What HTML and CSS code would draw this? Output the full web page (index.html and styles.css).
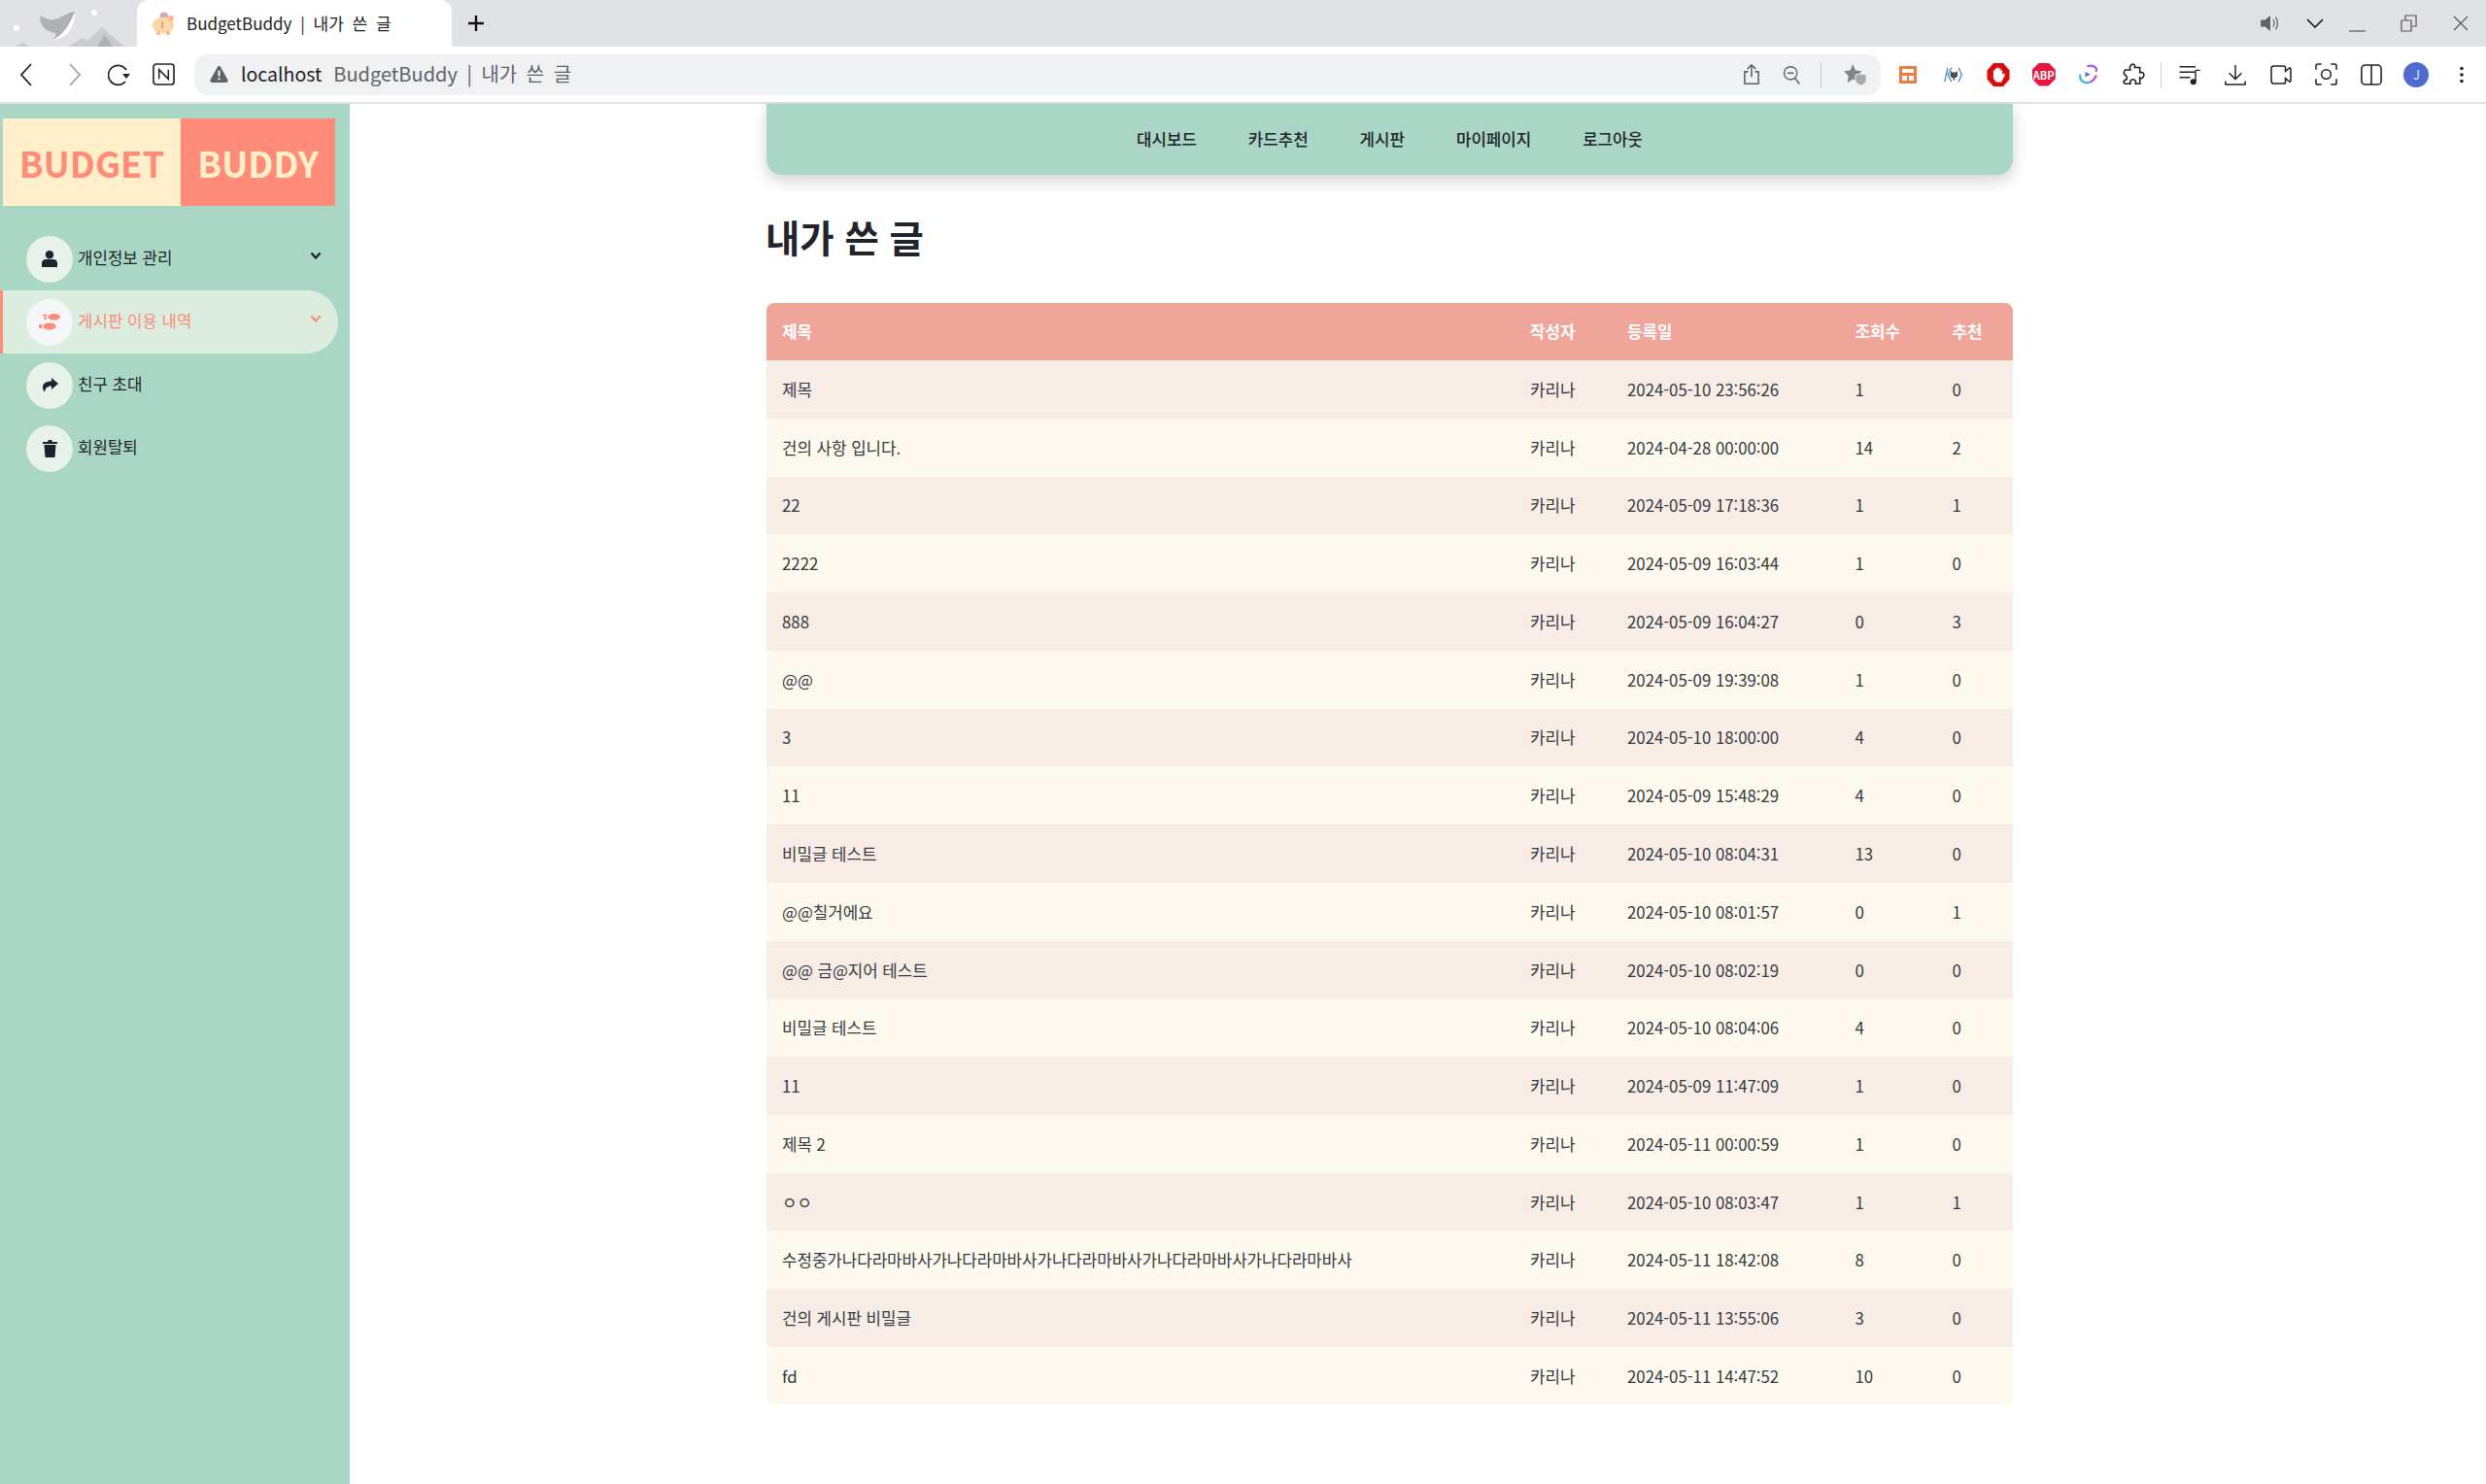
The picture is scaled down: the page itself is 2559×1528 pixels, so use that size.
FILE: index.html
```html
<!DOCTYPE html>
<html lang="ko">

<head>
    <meta charset="UTF-8">
    <title>BudgetBuddy | 내가 쓴 글</title>
    <link rel="stylesheet" href="styles.css">
</head>

<body>

    <div class="tab-strip">
        <svg class="theme-art" width="141" height="48" viewBox="0 0 141 48">
            <circle cx="17" cy="29" r="3" fill="#fff"/>
            <circle cx="97" cy="13" r="3" fill="#fff"/>
            <path d="M15 48 L23 44 L31 48 Z" fill="#c8cacd"/>
            <path d="M70 48 L85 39 L90 42 L105 28 L128 48 Z" fill="#c9cbce"/>
            <path d="M100 48 L108 36 L116 48 Z" fill="#aeb0b4"/>
            <path d="M41 16 C50 21 55 22 62 18 C69 14 74 12 77 12 C78 24 72 41 54 41 C60 35 58 34 53 33 C45 31 41 24 41 16 Z" fill="#aeb0b3"/>
            <path d="M77 12 C78 24 72 41 54 41 C66 36 72 24 77 12 Z" fill="#fff"/>
        </svg>
        <div class="tab">
            <svg class="favicon" width="26" height="26" viewBox="0 0 26 26">
                <circle cx="14" cy="6" r="4.5" fill="#c9a9c4"/>
                <ellipse cx="13" cy="15" rx="11" ry="8.5" fill="#fbd6a8"/>
                <rect x="6" y="21" width="4" height="4" fill="#f7c08c"/>
                <rect x="16" y="21" width="4" height="4" fill="#f7c08c"/>
                <circle cx="21" cy="8" r="3" fill="#f9b88c"/>
                <path d="M12 11 V18" stroke="#e98a6c" stroke-width="1.5"/>
            </svg>
            <span class="tab-title">BudgetBuddy | 내가 쓴 글</span>
        </div>
        <svg class="new-tab" width="18" height="18" viewBox="0 0 18 18">
            <path d="M9 1 V17 M1 9 H17" stroke="#111" stroke-width="2.4"/>
        </svg>
        <div class="window-controls">
            <svg class="sound-icon" width="22" height="18" viewBox="0 0 24 20">
                <path d="M1 6 H6 L12 1 V19 L6 14 H1 Z" fill="#5f6368"/>
                <path d="M15 6 C17 8 17 12 15 14 M18 3 C21 7 21 13 18 17" stroke="#5f6368" stroke-width="1.4" fill="none"/>
            </svg>
            <svg class="tab-search" width="18" height="10" viewBox="0 0 18 10">
                <path d="M1 1 L9 9 L17 1" stroke="#111" stroke-width="1.5" fill="none"/>
            </svg>
            <svg class="win-min" width="17" height="18" viewBox="0 0 17 18">
                <path d="M0 17 H17" stroke="#555" stroke-width="1.2"/>
            </svg>
            <svg class="win-restore" width="17" height="18" viewBox="0 0 17 18">
                <path d="M1 6 H11 V17 H1 Z M5 6 V1 H16 V12 H11" stroke="#555" stroke-width="1.2" fill="none"/>
            </svg>
            <svg class="win-close" width="16" height="16" viewBox="0 0 16 16">
                <path d="M1 1 L15 15 M15 1 L1 15" stroke="#555" stroke-width="1.2"/>
            </svg>
        </div>
    </div>

    <div class="toolbar">
        <svg class="nav-back" width="14" height="24" viewBox="0 0 14 24">
            <path d="M12 1 L2 12 L12 23" stroke="#222" stroke-width="1.8" fill="none"/>
        </svg>
        <svg class="nav-forward" width="14" height="24" viewBox="0 0 14 24">
            <path d="M2 1 L12 12 L2 23" stroke="#a0a0a0" stroke-width="1.8" fill="none"/>
        </svg>
        <svg class="nav-reload" width="24" height="24" viewBox="0 0 24 24">
            <path d="M18 19 A10 10 0 1 1 19 7" stroke="#222" stroke-width="1.7" fill="none"/>
            <path d="M16 13 H24 L20 18 Z" fill="#222" transform="translate(-1 -2)"/>
        </svg>
        <svg class="nav-notion" width="23" height="23" viewBox="0 0 24 24">
            <rect x="1" y="1" width="22" height="22" rx="3" stroke="#222" stroke-width="1.7" fill="none"/>
            <path d="M7 17 V7 L17 17 V7" stroke="#222" stroke-width="1.6" fill="none"/>
        </svg>

        <div class="address-bar">
            <svg class="warn-icon" width="19" height="17" viewBox="0 0 20 18">
                <path d="M10 0 C11 0 11.5 .5 12 1.5 L19.5 15 C20 16.5 19 18 17.5 18 H2.5 C1 18 0 16.5 .5 15 L8 1.5 C8.5 .5 9 0 10 0 Z" fill="#5f6368"/>
                <path d="M10 5 V11 M10 13 V15" stroke="#fff" stroke-width="2"/>
            </svg>
            <span class="url-host">localhost</span>
            <span class="url-title">BudgetBuddy | 내가 쓴 글</span>
            <div class="address-actions">
                <svg width="18" height="23" viewBox="0 0 20 26">
                    <path d="M6 10 H2 V24 H18 V10 H14 M10 16 V2 M5 7 L10 2 L15 7" stroke="#5f6368" stroke-width="1.8" fill="none"/>
                </svg>
                <svg class="zoom-out" width="20" height="20" viewBox="0 0 22 24">
                    <circle cx="10" cy="10" r="8" stroke="#5f6368" stroke-width="1.7" fill="none"/>
                    <path d="M6 10 H14 M15 16 L21 23" stroke="#5f6368" stroke-width="1.8"/>
                </svg>
                <span class="address-sep"></span>
                <svg class="fav-icon" width="24" height="22" viewBox="0 0 26 24">
                    <path d="M10 0 L13 7 L20 8 L15 13 L16 20 L10 17 L4 21 L5 13 L0 8 L7 7 Z" fill="#80868b"/>
                    <path d="M13 12 L19 11 L25 12 V18 C25 21 22 23 19 24 C16 23 13 21 13 18 Z" fill="#a5a8ac" stroke="#f0f1f3"/>
                </svg>
            </div>
        </div>

        <div class="ext-group">
            <svg width="18" height="18" viewBox="0 0 18 18">
                <rect width="18" height="18" rx="1" fill="#ee7b45"/>
                <rect x="3" y="3" width="12" height="4" fill="#fff"/>
                <rect x="3" y="10" width="5" height="5" fill="#fff"/>
                <rect x="10" y="10" width="5" height="5" fill="#fff"/>
            </svg>
            <svg width="23" height="16" viewBox="0 0 24 20">
                <path d="M5 1 L1 19 M10 1 L5 10 L10 19 M19 1 L23 10 L19 19" stroke="#3b82c4" stroke-width="1.5" fill="none"/>
                <path d="M9 5 L11 7 H15 L17 5 L18 10 C18 13 15 14 14 14 V17 H12 V14 C10 14 8 13 8 10 Z" fill="#4a4f55"/>
            </svg>
            <svg width="24" height="24" viewBox="0 0 25 26">
                <path d="M7 0 H18 L25 8 V18 L18 26 H7 L0 18 V8 Z" fill="#d80c0c"/>
                <path d="M7 13 V8 H9 V6 H11 V5 H13 V6 H15 V8 H17 V13 L19 11 L20 13 L16 21 H10 L7 17 Z" fill="#fff"/>
            </svg>
            <div class="abp-badge">ABP</div>
            <svg width="22" height="21" viewBox="0 0 24 24">
                <path d="M10 3 C14 1 19 2 21 5 V9" stroke="#a45ce0" stroke-width="2.5" fill="none"/>
                <path d="M2 12 V16 C3 21 9 23 14 21" stroke="#3ab6e8" stroke-width="2.5" fill="none"/>
                <path d="M21 13 C19 18 17 20 14 21" stroke="#c04ed8" stroke-width="2.5" fill="none"/>
                <path d="M8 9 L14 12 L8 15 Z" fill="#6a5ce0"/>
            </svg>
            <svg width="23" height="23" viewBox="0 0 26 26">
                <path d="M10 2 C13 0 15 3 14 5 H20 V11 C23 10 26 12 24 16 C23 18 21 18 20 17 V24 H15 C16 21 14 19 12 19 C10 19 8 21 9 24 H3 C1 24 1 22 2 20 C5 20 6 17 4 15 C2 13 0 12 3 8 H9 C8 6 8 4 10 2 Z" stroke="#222" stroke-width="1.8" fill="none"/>
            </svg>
        </div>
        <span class="toolbar-sep"></span>
        <div class="ext-group">
            <svg width="23" height="22" viewBox="0 0 24 24">
                <path d="M0 3 H18 M0 9 H18 M0 15 H12" stroke="#222" stroke-width="1.5"/>
                <path d="M18 7 H23 M18 7 V20" stroke="#222" stroke-width="1.5" fill="none"/>
                <circle cx="15.5" cy="20" r="3.3" fill="#222"/>
            </svg>
            <svg width="22" height="22" viewBox="0 0 24 24">
                <path d="M12 1 V16 M5 10 L12 17 L19 10 M1 19 V23 H23 V19" stroke="#222" stroke-width="1.6" fill="none"/>
            </svg>
            <svg width="22" height="20" viewBox="0 0 24 22">
                <path d="M4 1 H15 C16 1 17 2 17 3 V7 L22 3 C23 3 23 4 23 5 V17 C23 18 23 19 22 19 L17 15 V19 C17 20 16 21 15 21 H4 C2 21 1 20 1 18 V4 C1 2 2 1 4 1 Z" stroke="#222" stroke-width="1.7" fill="none"/>
            </svg>
            <svg width="23" height="23" viewBox="0 0 24 24">
                <path d="M7 1 H3 C2 1 1 2 1 3 V7 M17 1 H21 C22 1 23 2 23 3 V7 M7 23 H3 C2 23 1 22 1 21 V17 M17 23 H21 C22 23 23 22 23 21 V17" stroke="#222" stroke-width="1.6" fill="none"/>
                <circle cx="12" cy="12" r="5" stroke="#222" stroke-width="1.6" fill="none"/>
            </svg>
            <svg width="22" height="22" viewBox="0 0 24 24">
                <rect x="1" y="1" width="22" height="22" rx="4" stroke="#222" stroke-width="1.7" fill="none"/>
                <path d="M12 1 V23" stroke="#222" stroke-width="1.7"/>
            </svg>
            <div class="avatar">J</div>
            <svg width="6" height="18" viewBox="0 0 6 22">
                <circle cx="3" cy="3" r="2.2" fill="#222"/>
                <circle cx="3" cy="11" r="2.2" fill="#222"/>
                <circle cx="3" cy="19" r="2.2" fill="#222"/>
            </svg>
        </div>
    </div>

    <div class="page">
        <aside class="sidebar">
            <div class="logo">
                <span class="logo-budget">BUDGET</span>
                <span class="logo-buddy">BUDDY</span>
            </div>
            <ul class="side-menu">
                <li class="side-item">
                    <span class="side-circle">
                        <svg width="16" height="17" viewBox="0 0 16 17">
                            <circle cx="8" cy="4.2" r="4.2" fill="#1b2530"/>
                            <path d="M0 17 V13 C0 10.5 2 9 4 9 H12 C14 9 16 10.5 16 13 V17 Z" fill="#1b2530"/>
                        </svg>
                    </span>
                    <span class="side-label">개인정보 관리</span>
                    <svg class="side-chevron" width="12" height="9" viewBox="0 0 12 9">
                        <path d="M1.5 1.5 L6 6.5 L10.5 1.5" stroke="currentColor" stroke-width="2.4" fill="none"/>
                    </svg>
                </li>
                <li class="side-item active">
                    <span class="side-circle">
                        <svg width="22" height="17" viewBox="0 0 22 17">
                            <ellipse cx="15.7" cy="3.3" rx="6.3" ry="3.3" fill="currentColor"/>
                            <rect x="4.3" y="0.5" width="4" height="2.2" rx="1.1" fill="currentColor"/>
                            <rect x="5" y="3.6" width="3.5" height="2.4" rx="1.2" fill="currentColor"/>
                            <ellipse cx="11" cy="13" rx="6.7" ry="3.6" fill="currentColor"/>
                            <rect x="0" y="10.7" width="3.3" height="4.6" rx="1.6" fill="currentColor"/>
                        </svg>
                    </span>
                    <span class="side-label">게시판 이용 내역</span>
                    <svg class="side-chevron" width="12" height="9" viewBox="0 0 12 9">
                        <path d="M1.5 1.5 L6 6.5 L10.5 1.5" stroke="currentColor" stroke-width="2.4" fill="none"/>
                    </svg>
                </li>
                <li class="side-item">
                    <span class="side-circle">
                        <svg width="17" height="15" viewBox="0 0 17 15">
                            <path d="M10 0 L17 6 L10 12 V8.5 C6 8.5 3.5 10 3 15 C0 11 -1 4 10 3.5 Z" fill="#1b2530"/>
                        </svg>
                    </span>
                    <span class="side-label">친구 초대</span>
                </li>
                <li class="side-item">
                    <span class="side-circle">
                        <svg width="15" height="18" viewBox="0 0 15 18">
                            <path d="M0 2 H5 L6 0 H9 L10 2 H15 V4 H0 Z M1.5 5 H13.5 L12.5 18 H2.5 Z" fill="#1b2530"/>
                        </svg>
                    </span>
                    <span class="side-label">회원탈퇴</span>
                </li>
            </ul>
        </aside>

        <main class="content">
            <nav class="top-nav">
                <a class="top-link">대시보드</a>
                <a class="top-link">카드추천</a>
                <a class="top-link">게시판</a>
                <a class="top-link">마이페이지</a>
                <a class="top-link">로그아웃</a>
            </nav>

            <h1 class="page-title">내가 쓴 글</h1>

            <div class="table-wrap">
                <table class="post-table">
                    <thead>
                        <tr><th>제목</th><th>작성자</th><th>등록일</th><th>조회수</th><th>추천</th></tr>
                    </thead>
                    <tbody>
                        <tr><td>제목</td><td>카리나</td><td>2024-05-10 23:56:26</td><td>1</td><td>0</td></tr>
                        <tr><td>건의 사항 입니다.</td><td>카리나</td><td>2024-04-28 00:00:00</td><td>14</td><td>2</td></tr>
                        <tr><td>22</td><td>카리나</td><td>2024-05-09 17:18:36</td><td>1</td><td>1</td></tr>
                        <tr><td>2222</td><td>카리나</td><td>2024-05-09 16:03:44</td><td>1</td><td>0</td></tr>
                        <tr><td>888</td><td>카리나</td><td>2024-05-09 16:04:27</td><td>0</td><td>3</td></tr>
                        <tr><td>@@</td><td>카리나</td><td>2024-05-09 19:39:08</td><td>1</td><td>0</td></tr>
                        <tr><td>3</td><td>카리나</td><td>2024-05-10 18:00:00</td><td>4</td><td>0</td></tr>
                        <tr><td>11</td><td>카리나</td><td>2024-05-09 15:48:29</td><td>4</td><td>0</td></tr>
                        <tr><td>비밀글 테스트</td><td>카리나</td><td>2024-05-10 08:04:31</td><td>13</td><td>0</td></tr>
                        <tr><td>@@칠거에요</td><td>카리나</td><td>2024-05-10 08:01:57</td><td>0</td><td>1</td></tr>
                        <tr><td>@@ 금@지어 테스트</td><td>카리나</td><td>2024-05-10 08:02:19</td><td>0</td><td>0</td></tr>
                        <tr><td>비밀글 테스트</td><td>카리나</td><td>2024-05-10 08:04:06</td><td>4</td><td>0</td></tr>
                        <tr><td>11</td><td>카리나</td><td>2024-05-09 11:47:09</td><td>1</td><td>0</td></tr>
                        <tr><td>제목 2</td><td>카리나</td><td>2024-05-11 00:00:59</td><td>1</td><td>0</td></tr>
                        <tr><td>ㅇㅇ</td><td>카리나</td><td>2024-05-10 08:03:47</td><td>1</td><td>1</td></tr>
                        <tr><td>수정중가나다라마바사가나다라마바사가나다라마바사가나다라마바사가나다라마바사</td><td>카리나</td><td>2024-05-11 18:42:08</td><td>8</td><td>0</td></tr>
                        <tr><td>건의 게시판 비밀글</td><td>카리나</td><td>2024-05-11 13:55:06</td><td>3</td><td>0</td></tr>
                        <tr><td>fd</td><td>카리나</td><td>2024-05-11 14:47:52</td><td>10</td><td>0</td></tr>
                    </tbody>
                </table>
            </div>
        </main>
    </div>

</body>

</html>
```

FILE: styles.css
```css
html,
body {
    margin: 0;
    padding: 0;
}

body {
    width: 2559px;
    height: 1528px;
    overflow: hidden;
    background: #fff;
    font-family: "Noto Sans CJK KR", "Noto Sans", sans-serif;
    color: #212529;
}

/* browser window */
.tab-strip {
    position: relative;
    display: flex;
    align-items: center;
    height: 48px;
    background: #e0e2e6;
}

.theme-art {
    position: absolute;
    left: 0;
    top: 0;
}

.tab {
    position: relative;
    display: flex;
    align-items: center;
    width: 324px;
    height: 48px;
    margin-left: 141px;
    box-sizing: border-box;
    padding: 0 0 0 14px;
    background: #fff;
    border-radius: 12px 12px 0 0;
}

.tab-title {
    margin-left: 11px;
    padding-bottom: 2px;
    font-size: 17px;
    word-spacing: 4px;
    color: #222;
}

.new-tab {
    margin-left: 16px;
}

.window-controls {
    display: flex;
    align-items: center;
    margin-left: auto;
    padding-right: 18px;
}

.sound-icon {
    margin-right: 26px;
}

.tab-search {
    margin-right: 26px;
}

.win-min {
    margin-right: 36px;
}

.win-restore {
    margin-right: 37px;
}

.toolbar {
    position: relative;
    display: flex;
    align-items: center;
    height: 57px;
    box-sizing: border-box;
    padding-left: 20px;
    background: #fff;
    border-radius: 12px 12px 0 0;
}

.toolbar svg {
    flex-shrink: 0;
}

.nav-forward {
    margin-left: 36px;
}

.nav-reload {
    margin-left: 27px;
}

.nav-notion {
    margin-left: 22px;
}

.address-bar {
    display: flex;
    align-items: center;
    flex-shrink: 0;
    width: 1736px;
    height: 42px;
    margin-left: 20px;
    box-sizing: border-box;
    padding-left: 16px;
    background: #f0f1f3;
    border-radius: 14px;
}

.url-host {
    margin-left: 13px;
    padding-bottom: 2px;
    font-size: 19.5px;
    color: #202124;
}

.url-title {
    margin-left: 12px;
    padding-bottom: 2px;
    font-size: 20px;
    word-spacing: 4px;
    color: #5f6368;
}

.address-actions {
    display: flex;
    align-items: center;
    margin-left: auto;
    padding-right: 14.5px;
}

.zoom-out {
    margin-left: 22px;
}

.address-sep {
    width: 1px;
    height: 26px;
    margin: 0 20px 0 20px;
    background: #c8cacd;
}

.fav-icon {
    margin-left: 3px;
}

.ext-group {
    display: grid;
    grid-auto-flow: column;
    grid-auto-columns: 46.6px;
    justify-items: center;
    align-items: center;
    flex-shrink: 0;
    margin-left: 4.7px;
}

.toolbar-sep {
    flex-shrink: 0;
    width: 1px;
    height: 26px;
    margin: 0 1px 0 4.2px;
    background: #c8cacd;
}

.abp-badge {
    width: 24px;
    height: 24px;
    clip-path: polygon(30% 0, 70% 0, 100% 30%, 100% 70%, 70% 100%, 30% 100%, 0 70%, 0 30%);
    background: #e8173f;
    color: #fff;
    font-size: 11px;
    font-weight: 700;
    line-height: 24px;
    text-align: center;
}

.avatar {
    width: 26px;
    height: 26px;
    border-radius: 50%;
    background: #4f6bd0;
    color: #dfe6ff;
    font-size: 13px;
    line-height: 26px;
    text-align: center;
}

/* app */
.page {
    display: flex;
    height: 1421px;
    border-top: 2px solid #e1e3e3;
}

.sidebar {
    width: 360px;
    flex-shrink: 0;
    background: #a9d6c5;
}

.logo {
    display: flex;
    width: 342px;
    height: 90px;
    margin: 15px 0 0 3px;
    font-size: 36.5px;
    font-weight: 700;
    line-height: 91px;
}

.logo-budget {
    width: 183px;
    background: #ffefca;
    color: #ff8b78;
    text-align: center;
}

.logo-buddy {
    flex: 1;
    background: #ff8b78;
    color: #ffefca;
    text-align: center;
}

.side-menu {
    margin: 22px 0 0;
    padding: 0;
    list-style: none;
}

.side-item {
    display: flex;
    align-items: center;
    width: 348px;
    height: 65px;
    box-sizing: border-box;
    padding-left: 24px;
    border-left: 3px solid transparent;
    font-size: 16.8px;
    color: #212529;
}

.side-item.active {
    background: #daeddf;
    border-left-color: #ff8b78;
    border-radius: 0 32px 32px 0;
    color: #ff8b78;
}

.side-circle {
    display: flex;
    align-items: center;
    justify-content: center;
    width: 48px;
    height: 48px;
    margin-right: 5px;
    border-radius: 50%;
    background: #e8f2e9;
}

.side-item.active .side-circle {
    background: #f4f6fa;
}

.side-label {
    padding-bottom: 3px;
}

.side-chevron {
    margin-left: auto;
    margin-right: 17px;
    margin-bottom: 6px;
    color: #1b2530;
}

.side-item.active .side-chevron {
    color: #ff8b78;
}

.content {
    width: 1283px;
    margin-left: 429px;
}

.top-nav {
    display: flex;
    justify-content: center;
    align-items: center;
    height: 73px;
    background: #a9d6c5;
    border-radius: 0 0 16px 16px;
    box-shadow: 0 6px 16px rgba(0, 0, 0, 0.18);
}

.top-link {
    padding: 0 26.5px 2px;
    font-size: 16.8px;
    font-weight: 500;
    color: #212529;
}

.page-title {
    margin: 40px 0 46px -1px;
    font-size: 38.4px;
    font-weight: 700;
    line-height: 46px;
    color: #212529;
}

.table-wrap {
    border-radius: 8px;
    overflow: hidden;
}

.post-table {
    width: 100%;
    table-layout: fixed;
    border-collapse: collapse;
    font-size: 16.8px;
}

.post-table th {
    box-sizing: border-box;
    height: 59px;
    padding: 0 16px 2px;
    background: #f0a59b;
    color: #fff;
    font-weight: 700;
    text-align: left;
}

.post-table td {
    height: 59.78px;
    padding: 0 16px;
    color: #343a40;
}

.post-table th:nth-child(1) {
    width: 770px;
}

.post-table th:nth-child(2) {
    width: 100px;
}

.post-table th:nth-child(3) {
    width: 234.5px;
}

.post-table th:nth-child(4) {
    width: 100px;
}

.post-table tbody tr:nth-child(odd) {
    background: #f8ece7;
}

.post-table tbody tr:nth-child(even) {
    background: #fdf9ef;
}
```
